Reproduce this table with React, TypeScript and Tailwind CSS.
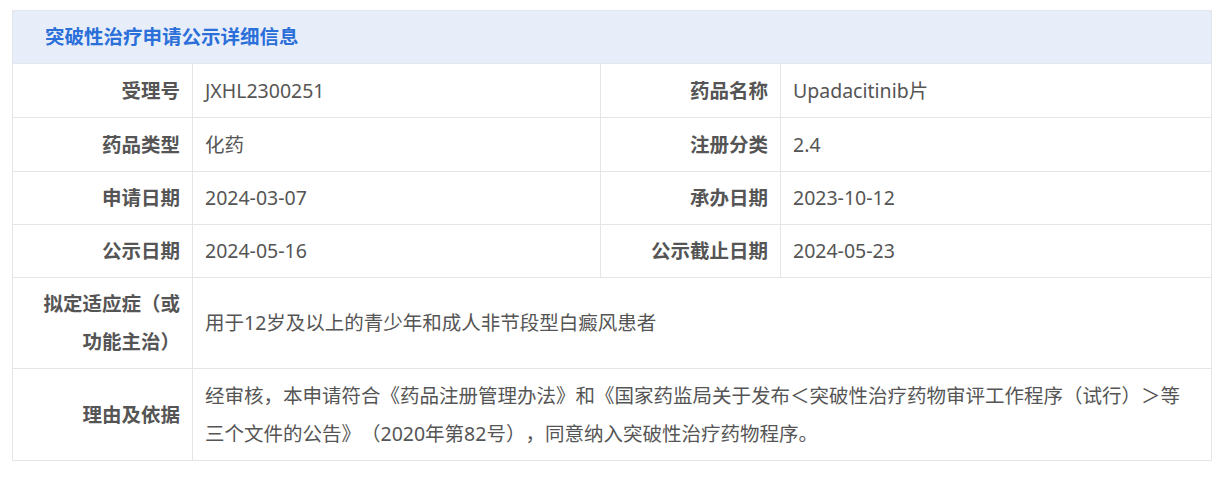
const rows: [string, string, string, string, string][] = [
  ["受理号", "JXHL2300251", "药品名称", "Upadacitinib片", "h-[54px]"],
  ["药品类型", "化药", "注册分类", "2.4", "h-[54px]"],
  ["申请日期", "2024-03-07", "承办日期", "2023-10-12", "h-[53px]"],
  ["公示日期", "2024-05-16", "公示截止日期", "2024-05-23", "h-[53px]"],
];

const font = {
  fontFamily: '"Noto Sans", "Noto Sans CJK SC", sans-serif',
};

export default function App() {
  return (
    <div
      className="bg-white min-h-screen pt-[10px] pl-[12px] [text-spacing-trim:space-all]"
      style={font}
    >
      <table className="w-[1200px] border-collapse table-fixed text-[19.5px] text-[#555]">
        <colgroup>
          <col className="w-[180px]" />
          <col className="w-[408px]" />
          <col className="w-[180px]" />
          <col />
        </colgroup>
        <thead>
          <tr className="h-[53px] bg-[#e8eef9]">
            <th
              colSpan={4}
              className="border border-[#e3e6ea] text-left pl-[32px] text-[19.5px] font-bold text-[#2b6fd9]"
            >
              突破性治疗申请公示详细信息
            </th>
          </tr>
        </thead>
        <tbody>
          {rows.map((r) => (
            <tr key={r[0]} className={r[4]}>
              <td className="border border-[#e5e5e5] text-right pr-[12px] font-bold">
                {r[0]}
              </td>
              <td className="border border-[#e5e5e5] pl-[12px]">{r[1]}</td>
              <td className="border border-[#e5e5e5] text-right pr-[12px] font-bold">
                {r[2]}
              </td>
              <td className="border border-[#e5e5e5] pl-[12px]">{r[3]}</td>
            </tr>
          ))}
          <tr className="h-[91px]">
            <td className="border border-[#e5e5e5] text-right pr-[12px] font-bold leading-[38px]">
              拟定适应症（或
              <br />
              功能主治）
            </td>
            <td colSpan={3} className="border border-[#e5e5e5] pl-[12px]">
              用于12岁及以上的青少年和成人非节段型白癜风患者
            </td>
          </tr>
          <tr className="h-[92px]">
            <td className="border border-[#e5e5e5] text-right pr-[12px] font-bold">
              理由及依据
            </td>
            <td
              colSpan={3}
              className="border border-[#e5e5e5] pl-[12px] pr-[20px] leading-[38px]"
            >
              经审核，本申请符合《药品注册管理办法》和《国家药监局关于发布＜突破性治疗药物审评工作程序（试行）＞等三个文件的公告》（2020年第82号），同意纳入突破性治疗药物程序。
            </td>
          </tr>
        </tbody>
      </table>
    </div>
  );
}
